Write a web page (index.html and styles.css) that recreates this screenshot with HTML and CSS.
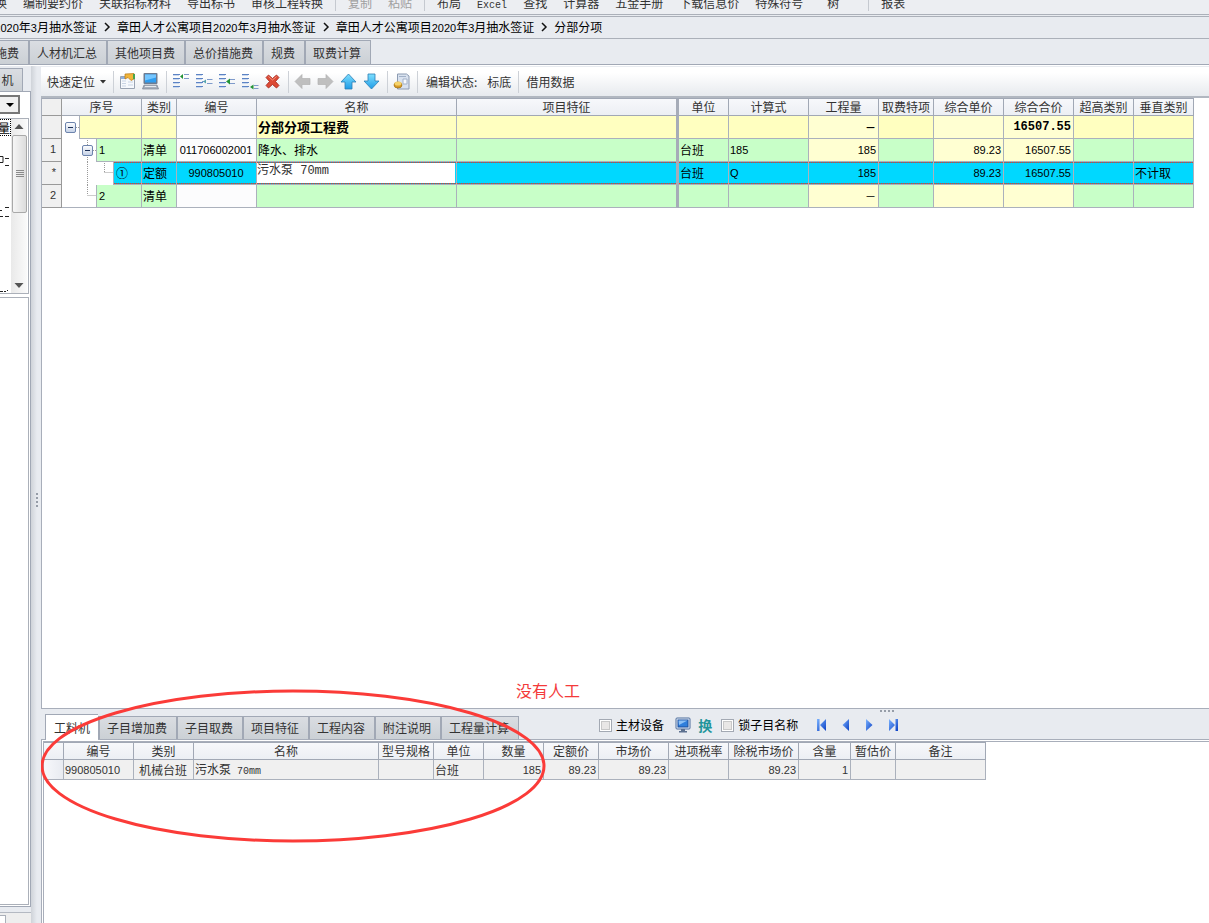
FILE: index.html
```html
<!DOCTYPE html>
<html lang="zh-CN">
<head>
<meta charset="utf-8">
<title>分部分项</title>
<link rel="stylesheet" href="styles.css">
</head>
<body>
<svg class="defs" aria-hidden="true">
  <defs>
    <linearGradient id="blue" x1="0" y1="0" x2="0" y2="1"><stop offset="0" stop-color="#7fe0ff"/><stop offset="1" stop-color="#1e9be6"/></linearGradient>
    <linearGradient id="navy" x1="0" y1="0" x2="1" y2="1"><stop offset="0" stop-color="#7cb4ff"/><stop offset="1" stop-color="#0a3fc4"/></linearGradient>
    <linearGradient id="box" x1="0" y1="0" x2="0" y2="1"><stop offset="0" stop-color="#fff"/><stop offset="1" stop-color="#c3d0e6"/></linearGradient>
    <g id="minus"><rect x=".5" y=".5" width="10" height="10" rx="1.500" fill="url(#box)" stroke="#6d84ad"/><path d="M3 5.500h5" stroke="#1c2f55"/></g>
    <g id="lines"><path d="M1 .5h7M1 4.500h7M1 8.500h7M1 12.500h7" stroke="#5c83c4" fill="none"/><path d="M1 1.500h6M1 5.500h6M1 9.500h6M1 13.500h6" stroke="#c9d8ef" fill="none"/></g>
  </defs>
</svg>

<nav class="menubar">
  <button class="menu-cut">换</button>
  <button>编制要约价</button><button>关联招标材料</button><button>导出标书</button><button>审核工程转换</button>
  <i class="menu-sep"></i>
  <button disabled>复制</button><button disabled>粘贴</button>
  <i class="menu-sep"></i>
  <button>布局</button><button><span class="latin">Excel</span></button><button>查找</button><button>计算器</button><button>五金手册</button><button>下载信息价</button><button>特殊符号</button><button class="menu-tree">树</button>
  <i class="menu-sep wide"></i>
  <button>报表</button>
</nav>

<nav class="crumbs">
  <a href="#" class="crumb-cut"><span><span class="num">2020</span>年<span class="num">3</span>月抽水签证</span></a>
  <svg width="8" height="10" viewBox="0 0 8 10"><path d="M2 1l4 4-4 4" fill="none" stroke="#111" stroke-width="1.500"/></svg>
  <a href="#">章田人才公寓项目<span class="num">2020</span>年<span class="num">3</span>月抽水签证</a>
  <svg width="8" height="10" viewBox="0 0 8 10"><path d="M2 1l4 4-4 4" fill="none" stroke="#111" stroke-width="1.500"/></svg>
  <a href="#">章田人才公寓项目<span class="num">2020</span>年<span class="num">3</span>月抽水签证</a>
  <svg width="8" height="10" viewBox="0 0 8 10"><path d="M2 1l4 4-4 4" fill="none" stroke="#111" stroke-width="1.500"/></svg>
  <a href="#">分部分项</a>
</nav>

<div class="tabs top-tabs">
  <button class="tab tab-cut">施费</button><button class="tab">人材机汇总</button><button class="tab">其他项目费</button><button class="tab">总价措施费</button><button class="tab">规费</button><button class="tab">取费计算</button>
</div>

<div class="work">
  <aside class="side">
    <button class="side-tab">机</button>
    <div class="side-frame">
      <button class="combo" aria-label="展开"><svg width="16" height="16" viewBox="0 0 16 16"><path d="M4 6h8l-4 4z" fill="#000"/></svg></button>
      <div class="list">
        <div class="list-items">
          <span class="picked">量</span>
          <svg width="11" height="156" viewBox="0 0 11 156"><path d="M0 20.500h3v6H0M5 22.500h4M5 29.500h4M0 74.500h2M5 71.500h4M0 80.500h3M5 80.500h4M0 155.500h3M4 155.500h2M7 154.500h1" fill="none" stroke="#222"/></svg>
        </div>
        <div class="scroll">
          <svg width="16" height="16" viewBox="0 0 16 16"><path d="M3.500 10L8 5l4.500 5z" fill="#555"/></svg>
          <div class="thumb"><svg width="8" height="8" viewBox="0 0 8 8"><path d="M0 .5h8M0 2.500h8M0 4.500h8M0 6.500h8" stroke="#8a8a8a"/></svg></div>
          <svg width="16" height="16" viewBox="0 0 16 16"><path d="M3.500 6L8 11l4.500-5z" fill="#555"/></svg>
        </div>
      </div>
      <div class="side-box"></div>
    </div>
    <div class="side-foot"><i></i></div>
  </aside>
  <div class="splitter"><svg width="2" height="14" viewBox="0 0 2 14"><path d="M0 0h2v2H0zM0 4h2v2H0zM0 8h2v2H0zM0 12h2v2H0z" fill="#969da8"/></svg></div>

  <main class="main">
    <div class="toolbar">
      <button class="text-btn locate">快速定位<svg width="6" height="4" viewBox="0 0 6 4"><path d="M0 0h6L3 3.500z" fill="#333"/></svg></button>
      <i class="sep"></i>
      <button class="icon" aria-label="属性"><svg width="17" height="17" viewBox="0 0 17 17"><path d="M1.500 3.500h14v12h-14z" fill="#f6f9fd" stroke="#9aa4b3"/><path d="M3 8h4M3 10.500h4M3 13h4M9 9h5M9 12h5" stroke="#c9d4e4"/><path d="M2 4h5v2H2z" fill="#8fb1e0"/><path d="M6 1l9-.5V6l-3 1.500L9 4.500 6 6z" fill="#f1b53a" stroke="#b87916" stroke-width=".7"/><path d="M14 1h2v5h-2z" fill="#49a54c"/></svg></button>
      <button class="icon" aria-label="计算机"><svg width="17" height="17" viewBox="0 0 17 17"><rect x="1.500" y="0" width="14" height="11" rx="1" fill="#6d7c92"/><rect x="3" y="1.500" width="11" height="8" fill="#2f9df0"/><path d="M3 1.500h11v3l-11 3z" fill="#74c6ff"/><path d="M2 12h13l1.500 4H.5z" fill="#a9b1bd" stroke="#78818f" stroke-width=".7"/><path d="M3 13.500h11" stroke="#e8ebef"/></svg></button>
      <i class="sep"></i>
      <button class="icon" aria-label="插入首行"><svg width="18" height="17" viewBox="0 0 18 17"><use href="#lines" y="1"/><path d="M12 1.500h5M12 5.500h5" stroke="#7f9bcb"/><path d="M8 3.500l3-2.500v5z" fill="#249437"/></svg></button>
      <button class="icon" aria-label="插入子行"><svg width="18" height="17" viewBox="0 0 18 17"><use href="#lines" y="1"/><path d="M12 6.500h5.500M12 10.500h5.500M7 8.500h4" stroke="#7f9bcb"/><path d="M8 8.500l3-2v4z" fill="#56a5ae"/></svg></button>
      <button class="icon" aria-label="插入行"><svg width="18" height="17" viewBox="0 0 18 17"><use href="#lines" y="1"/><path d="M12 6.500h5M12 10.500h5" stroke="#7f9bcb"/><path d="M8 8.500l4-3v6z" fill="#249437"/></svg></button>
      <button class="icon" aria-label="追加行"><svg width="18" height="17" viewBox="0 0 18 17"><use href="#lines" y="1"/><path d="M13 12.500h4.500M13 15.500h4.500" stroke="#7f9bcb"/><path d="M9 14l3.500-2.500v5z" fill="#249437"/></svg></button>
      <button class="icon" aria-label="删除"><svg width="15" height="15" viewBox="0 0 15 15"><path d="M1 3.500L3.500 1l4 3.500L11.500 1 14 3.500 10.500 7.500 14 11.500 11.500 14l-4-3.500-4 3.500L1 11.500l3.500-4z" fill="#dc4a35" stroke="#a32318" stroke-width=".8"/><path d="M3.500 2.500l4 3.500 4-3.500" fill="none" stroke="#f4957f"/></svg></button>
      <i class="sep"></i>
      <button class="icon" aria-label="左移"><svg width="17" height="17" viewBox="0 0 17 17"><path d="M1 8.500l7-7V5.500h8v6H8v4z" fill="#bfbfbf" stroke="#b2b2b2" stroke-width=".7"/></svg></button>
      <button class="icon" aria-label="右移"><svg width="17" height="17" viewBox="0 0 17 17"><path d="M16 8.500l-7-7V5.500H1v6h8v4z" fill="#bfbfbf" stroke="#b2b2b2" stroke-width=".7"/></svg></button>
      <button class="icon" aria-label="上移"><svg width="17" height="17" viewBox="0 0 17 17"><path d="M8.500 1l7.500 8h-4v7H5V9H1z" fill="url(#blue)" stroke="#2b7fb5" stroke-width=".8"/></svg></button>
      <button class="icon" aria-label="下移"><svg width="17" height="17" viewBox="0 0 17 17"><path d="M8.500 16L1 8h4V1h7v7h4z" fill="url(#blue)" stroke="#2b7fb5" stroke-width=".8"/></svg></button>
      <i class="sep"></i>
      <button class="icon" aria-label="费用"><svg width="17" height="17" viewBox="0 0 17 17"><path d="M4.500 1h9l2.500 2v13H4.500z" fill="#d9e2ef" stroke="#8c9bb2"/><path d="M6 3.500h7M10 6h4v5h-4z" fill="#f8fafd" stroke="#a2b1c8"/><ellipse cx="5" cy="12" rx="4" ry="3" fill="#d89c26" stroke="#9b6a10" stroke-width=".7"/><ellipse cx="5" cy="10.500" rx="3.500" ry="2" fill="#f6d36b"/></svg></button>
      <i class="sep"></i>
      <span class="text-btn state">编辑状态:</span><button class="text-btn">标底</button>
      <i class="sep"></i>
      <button class="text-btn borrow">借用数据</button>
    </div>

    <section class="grid-area">
      <table class="grid">
        <colgroup><col class="w20"><col class="w80"><col class="w35"><col class="w80"><col class="w200"><col class="w222"><col class="w50"><col class="w80"><col class="w70"><col class="w55"><col class="w70"><col class="w70"><col class="w60"><col class="w60"></colgroup>
        <thead><tr><th class="rowhead"></th><th>序号</th><th>类别</th><th>编号</th><th>名称</th><th class="freeze">项目特征</th><th>单位</th><th>计算式</th><th>工程量</th><th>取费特项</th><th>综合单价</th><th>综合合价</th><th>超高类别</th><th>垂直类别</th></tr></thead>
        <tbody>
          <tr class="sum">
            <td class="rowhead"></td>
            <td class="tree"><div><svg width="17" height="23" viewBox="0 0 17 23"><use href="#minus" x="3" y="6"/><path d="M14 11.500h3" stroke="#999" stroke-dasharray="1 1"/></svg><span></span></div></td>
            <td></td><td class="code"></td><td>分部分项工程费</td><td class="freeze"></td><td></td><td></td><td class="money dash">－</td><td></td><td class="money"></td><td class="money n">16507.55</td><td></td><td></td>
          </tr>
          <tr class="item">
            <td class="rowhead n">1</td>
            <td class="tree"><div><svg width="34" height="23" viewBox="0 0 34 23"><path d="M25.500 1v5M25.500 18v5M31 11.500h3" stroke="#999" stroke-dasharray="1 1"/><use href="#minus" x="20" y="6"/></svg><span class="n">1</span></div></td>
            <td>清单</td><td class="code n">011706002001</td><td>降水、排水</td><td class="freeze"></td><td>台班</td><td class="n">185</td><td class="money n">185</td><td></td><td class="money n">89.23</td><td class="money n">16507.55</td><td></td><td></td>
          </tr>
          <tr class="item current">
            <td class="rowhead n">*</td>
            <td class="tree"><div><svg width="51" height="23" viewBox="0 0 51 23"><path d="M25.500 0v23M42.500 1v10M42.500 10.500h9" fill="none" stroke="#999" stroke-dasharray="1 1"/></svg><span>①</span></div></td>
            <td>定额</td><td class="code n">990805010</td><td class="editing"><input type="text" value="污水泵 70mm" aria-label="名称"></td><td class="freeze"></td><td>台班</td><td class="n">Q</td><td class="money n">185</td><td></td><td class="money n">89.23</td><td class="money n">16507.55</td><td></td><td>不计取</td>
          </tr>
          <tr class="item last">
            <td class="rowhead n">2</td>
            <td class="tree"><div><svg width="34" height="22" viewBox="0 0 34 22"><path d="M25.500 0v10M25.500 10.500h9" fill="none" stroke="#999" stroke-dasharray="1 1"/></svg><span class="n">2</span></div></td>
            <td>清单</td><td class="code"></td><td></td><td class="freeze"></td><td></td><td></td><td class="money dash">－</td><td></td><td class="money"></td><td class="money"></td><td></td><td></td>
          </tr>
        </tbody>
      </table>
    </section>

    <section class="lower">
      <svg class="grip" width="14" height="2" viewBox="0 0 14 2"><path d="M0 0h2v2H0zM4 0h2v2H4zM8 0h2v2H8zM12 0h2v2h-2z" fill="#969da8"/></svg>
      <div class="lower-bar">
        <div class="tabs">
          <button class="tab active">工料机</button><button class="tab">子目增加费</button><button class="tab">子目取费</button><button class="tab">项目特征</button><button class="tab">工程内容</button><button class="tab">附注说明</button><button class="tab">工程量计算</button>
        </div>
        <div class="controls">
          <label><input type="checkbox">主材设备</label>
          <button class="icon monitor" aria-label="显示"><svg width="16" height="16" viewBox="0 0 16 16"><rect x="1" y="1" width="14" height="11" rx="1" fill="#e6eef8" stroke="#4c6c9c"/><rect x="3" y="3" width="10" height="7" fill="#2f7fdc" stroke="#1c4f9c"/><path d="M3.500 3.500h9L4 8z" fill="#8cc0f5"/><path d="M6 12h4v2h2v1.500H4V14h2z" fill="#5d7190"/></svg></button>
          <button class="swap">换</button>
          <label><input type="checkbox">锁子目名称</label>
          <button class="nav" aria-label="首条"><svg width="11" height="12" viewBox="0 0 11 12"><path d="M1 0h2.500v12H1zM10 0v12L4 6z" fill="url(#navy)"/></svg></button>
          <button class="nav" aria-label="上一条"><svg width="11" height="12" viewBox="0 0 11 12"><path d="M9 0v12L2.500 6z" fill="url(#navy)"/></svg></button>
          <button class="nav" aria-label="下一条"><svg width="11" height="12" viewBox="0 0 11 12"><path d="M2 0v12l6.500-6z" fill="url(#navy)"/></svg></button>
          <button class="nav" aria-label="末条"><svg width="11" height="12" viewBox="0 0 11 12"><path d="M7.500 0H10v12H7.500zM1 0v12l6-6z" fill="url(#navy)"/></svg></button>
        </div>
      </div>
      <div class="lower-pane"><div class="lower-inner">
        <table class="grid detail">
          <colgroup><col class="w20"><col class="w70"><col class="w60"><col class="w185"><col class="w55"><col class="w50"><col class="w60"><col class="w55"><col class="w70"><col class="w60"><col class="w70"><col class="w52"><col class="w45"><col class="w90"></colgroup>
          <thead><tr><th></th><th>编号</th><th>类别</th><th>名称</th><th>型号规格</th><th>单位</th><th>数量</th><th>定额价</th><th>市场价</th><th>进项税率</th><th>除税市场价</th><th>含量</th><th>暂估价</th><th>备注</th></tr></thead>
          <tbody><tr><td class="pointer"></td><td class="n">990805010</td><td class="mid">机械台班</td><td>污水泵<span class="latin spec"> 70mm</span></td><td></td><td>台班</td><td class="num-r n">185</td><td class="num-r n">89.23</td><td class="num-r n">89.23</td><td></td><td class="num-r n">89.23</td><td class="num-r n">1</td><td></td><td></td></tr></tbody>
        </table>
      </div></div>
      <svg class="ring" width="508" height="156" viewBox="0 0 508 156"><ellipse cx="252" cy="78" rx="251" ry="75" fill="none" stroke="#fb3b38" stroke-width="3"/></svg>
      <span class="note">没有人工</span>
    </section>
  </main>
</div>
</body>
</html>
```
FILE: styles.css
```css
* { box-sizing: border-box; }

html, body { height: 100%; }

body {
  margin: 0;
  display: flex;
  flex-direction: column;
  overflow: hidden;
  background: #e8ebf0;
  color: #333;
  font: 12px/16px "Noto Sans CJK SC", sans-serif;
}

button, input {
  margin: 0;
  padding: 0;
  border: 0;
  background: none;
  color: inherit;
  font: inherit;
  white-space: nowrap;
}

svg { display: block; flex: none; }
.defs { position: absolute; width: 0; height: 0; }
.n { font-family: "Liberation Sans", sans-serif; font-size: 11px; }
.latin { font-family: "Liberation Mono", monospace; font-size: 10px; line-height: 12px; }

/* menu */
.menubar {
  display: flex;
  align-items: flex-end;
  flex: none;
  height: 15px;
  padding-bottom: 3px;
  border-bottom: 1px solid #abb0b9;
  background: #eceef2;
}
.menubar button { flex: none; padding: 0 8px; height: 16px; }
.menubar button:disabled { color: #a0a0a0; }
.menubar .menu-cut { width: 15px; padding: 0 8px 0 0; display: flex; justify-content: flex-end; overflow: hidden; }
.menubar .menu-tree { padding: 0 16px; }
.menu-sep { flex: none; width: 1px; height: 14px; margin: 0 4px 0 4px; background: #c5c9d0; }
.menu-sep.wide { margin-left: 13px; }

/* breadcrumbs */
.crumbs {
  display: flex;
  align-items: center;
  flex: none;
  gap: 6px;
  height: 23px;
  margin-top: 1px;
  padding-bottom: 1px;
  border: solid #abb0b9;
  border-width: 1px 0;
}
.crumbs a { color: #000; text-decoration: none; white-space: nowrap; }
.crumbs .num { font: 11px/16px "Liberation Sans", sans-serif; }
.crumb-cut { display: flex; justify-content: flex-end; width: 97px; overflow: hidden; }

/* tabs */
.tabs { display: flex; align-items: flex-end; }
.top-tabs { flex: none; height: 26px; border-bottom: 1px solid #a1a8b5; }
.tab {
  height: 24px;
  padding: 0 9px 0 7px;
  border: solid #a1a8b5;
  border-width: 1px 0 0 2px;
  background: linear-gradient(#dadde2, #cbd0d5);
}
.tab:last-child { border-right-width: 1px; }
.tab-cut { display: flex; justify-content: flex-end; align-items: center; width: 28px; overflow: hidden; border-left: 0; }

.work { display: flex; flex: 1; min-height: 0; border-top: 1px solid #fff; }

/* left side */
.side { display: flex; flex-direction: column; flex: none; width: 35px; margin-right: -4px; padding-top: 2px; }
.side-tab {
  width: 23px;
  height: 23px;
  padding-right: 7px;
  border: solid #a1a8b5;
  border-width: 1px 1px 0 0;
  background: linear-gradient(#dadde2, #cbd0d5);
}
.side-frame {
  display: flex;
  flex-direction: column;
  flex: 1;
  width: 31px;
  padding: 3px 1px 1px 0;
  border: solid #a1a8b5;
  border-width: 1px 1px 1px 0;
  background: #fff;
}
.combo { display: flex; align-items: center; justify-content: flex-end; width: 20px; height: 19px; border: 2px solid #777; border-left: 0; background: #f0f0f0; }
.list { display: flex; height: 176px; margin-top: 4px; border: solid #abb0b9; border-width: 1px 1px 1px 0; }
.list-items { width: 11px; overflow: hidden; color: #000; }
.picked { display: flex; justify-content: flex-end; width: 11px; height: 17px; border: 1px dotted #000; border-left: 0; }
.scroll { display: flex; flex-direction: column; width: 16px; background: linear-gradient(90deg, #e9e9e9, #fafafa); }
.scroll > svg:last-child { margin-top: auto; }
.thumb { display: flex; align-items: center; justify-content: center; height: 78px; margin-left: 1px; border: 1px solid #a9a9a9; border-radius: 2px; background: linear-gradient(90deg, #f6f6f6, #dcdcdc); }
.side-box { flex: 1; margin-top: 3px; border: solid #abb0b9; border-width: 1px 1px 1px 0; }
.side-foot { height: 11px; margin-top: 5px; padding-top: 2px; border: solid #b4b9c2; border-width: 1px 1px 0 0; background: #eee; }
.side-foot i { display: block; width: 6px; height: 9px; border: 1px solid #abb0b9; border-left: 0; background: #fff; }
.splitter {
  display: flex;
  align-items: center;
  justify-content: center;
  flex: none;
  width: 10px;
  padding: 10px 0 0 2px;
  background: linear-gradient(90deg, #cfd3d9, #e8ebf0 6px);
}

/* main */
.main { display: flex; flex-direction: column; flex: 1; min-width: 0; padding-top: 1px; }
.toolbar { display: flex; align-items: center; flex: none; height: 31px; padding-left: 6px; border-bottom: 2px solid #b1b7c0; background: linear-gradient(#fff 20%, #e7eaee); }
.text-btn { padding: 0 3px; }
.locate { display: flex; align-items: center; gap: 5px; padding: 0 3px 0 0; }
.state { padding: 0 7px 0 6px; }
.borrow { padding-left: 5px; }
.icon { display: flex; align-items: center; justify-content: center; flex: none; width: 23px; height: 22px; }
.sep { flex: none; width: 1px; height: 22px; margin: 0 2px 0 4px; background: #cdd1d7; }

.grid-area { flex: 1; min-height: 0; overflow: hidden; border: solid #a8aeba; border-width: 0 0 1px 1px; background: #fff; }

.grid { table-layout: fixed; width: 0; border-spacing: 0; border-top: 1px solid #a1a8b5; }
.grid th, .grid td { padding: 0 2px 0 1px; overflow: hidden; border: solid #abb1bc; border-width: 0 1px 1px 0; white-space: nowrap; }
.grid th { height: 17px; padding: 0; border-color: #a1a8b5; background: linear-gradient(#f7f8fb, #eceff4); font-weight: 400; line-height: 16px; text-align: center; }
.grid td { height: 23px; }
.grid .rowhead { padding: 0 5px 3px 0; border-color: #999; background: #f0f0f0; color: #333; text-align: right; }
.grid .freeze { border-right: 3px solid #a6acb8; }
.grid tbody { color: #000; }
.grid tbody .n { line-height: 16px; }

.sum td { background: #ffffc0; font-weight: 700; font-size: 13px; }
.grid .sum .n { font-size: 12px; font-family: "Liberation Mono", monospace; }
.item td { background: #c8ffc8; }
.grid .code { background: #fcfcfd; text-align: center; }
.grid .money { background: #ffffd2; text-align: right; }
.grid .dash { font-size: 11px; }
.grid .tree { padding: 0; border-bottom: 0; background: #fff; }
.last .tree { border-bottom: 1px solid #abb1bc; }
.tree div { display: flex; height: 23px; }
.last .tree div { height: 22px; }
.tree span { flex: 1; padding: 3px 0 0 2px; border: solid #abb1bc; border-width: 0 0 1px 1px; background: #c8ffc8; }
.last .tree span { border-bottom: 0; }
.sum .tree span { background: #ffffc0; }

/* selected row with its dotted focus edge */
.grid .current td:not(.rowhead, .tree),
.current .tree span {
  background:
    linear-gradient(90deg, #e8402a 50%, #08a0c0 50%) left top / 2px 1px repeat-x padding-box,
    linear-gradient(90deg, #e8402a 50%, #08a0c0 50%) left bottom / 2px 1px repeat-x padding-box,
    #00d8ff;
}
.grid .current .editing { padding: 1px 1px 1px 0; }
.editing input { display: block; width: 100%; height: 20px; padding: 0 0 8px; background: #fff; color: #333; font: 12px/12px "Liberation Mono", "Noto Sans CJK SC", monospace; }

/* lower pane */
.lower { position: relative; display: flex; flex-direction: column; flex: none; height: 214px; }
.grip { position: absolute; top: 1px; left: 839px; }
.lower-bar { display: flex; flex: none; height: 30px; padding-left: 4px; }
.lower-bar .tab { height: 23px; }
.lower-bar .tab.active { position: relative; height: 26px; margin-bottom: -1px; padding: 0 8px; border-width: 1px 0 0 1px; background: #fff; }
.controls { display: flex; align-items: center; margin-left: 80px; padding-top: 2px; color: #000; }
.controls label { display: flex; align-items: center; gap: 4px; }
.controls input { appearance: none; width: 13px; height: 13px; border: 1px solid #a3a9b3; background: #e9e7e6; box-shadow: inset 0 0 0 1px #fff, inset 0 0 0 2px #c8c8c8; }
.monitor { width: 16px; margin: 0 7px 0 11px; }
.swap { margin-right: 9px; color: #22959a; font-size: 14px; font-weight: 700; }
.nav { display: flex; justify-content: center; width: 24px; }
.controls label + .nav { margin-left: 11px; }
.lower-pane { flex: 1; padding: 1px 0 0 1px; border: solid #a8aeba; border-width: 1px 0 0 1px; background: #fff; }
.lower-inner { height: 100%; border: solid #a8aeba; border-width: 1px 0 0 1px; }
.detail tbody { color: #333; }
.grid.detail td { height: 20px; background: #f0f0f0; }
.grid.detail .pointer { background: linear-gradient(90deg, #f7f8fb, #e8ebf1); }
.grid .mid { text-align: center; }
.grid .num-r { text-align: right; }
.spec { white-space: pre; }

/* review marks */
.ring { position: absolute; top: -21px; left: 0; pointer-events: none; }
.note { position: absolute; top: -31px; left: 475px; color: #f43a3a; font-size: 16px; line-height: 24px; }

/* column widths */
.w20 { width: 20px; } .w35 { width: 35px; } .w45 { width: 45px; } .w50 { width: 50px; }
.w52 { width: 52px; } .w55 { width: 55px; } .w60 { width: 60px; } .w70 { width: 70px; }
.w80 { width: 80px; } .w90 { width: 90px; } .w185 { width: 185px; } .w200 { width: 200px; }
.w222 { width: 222px; }
```
